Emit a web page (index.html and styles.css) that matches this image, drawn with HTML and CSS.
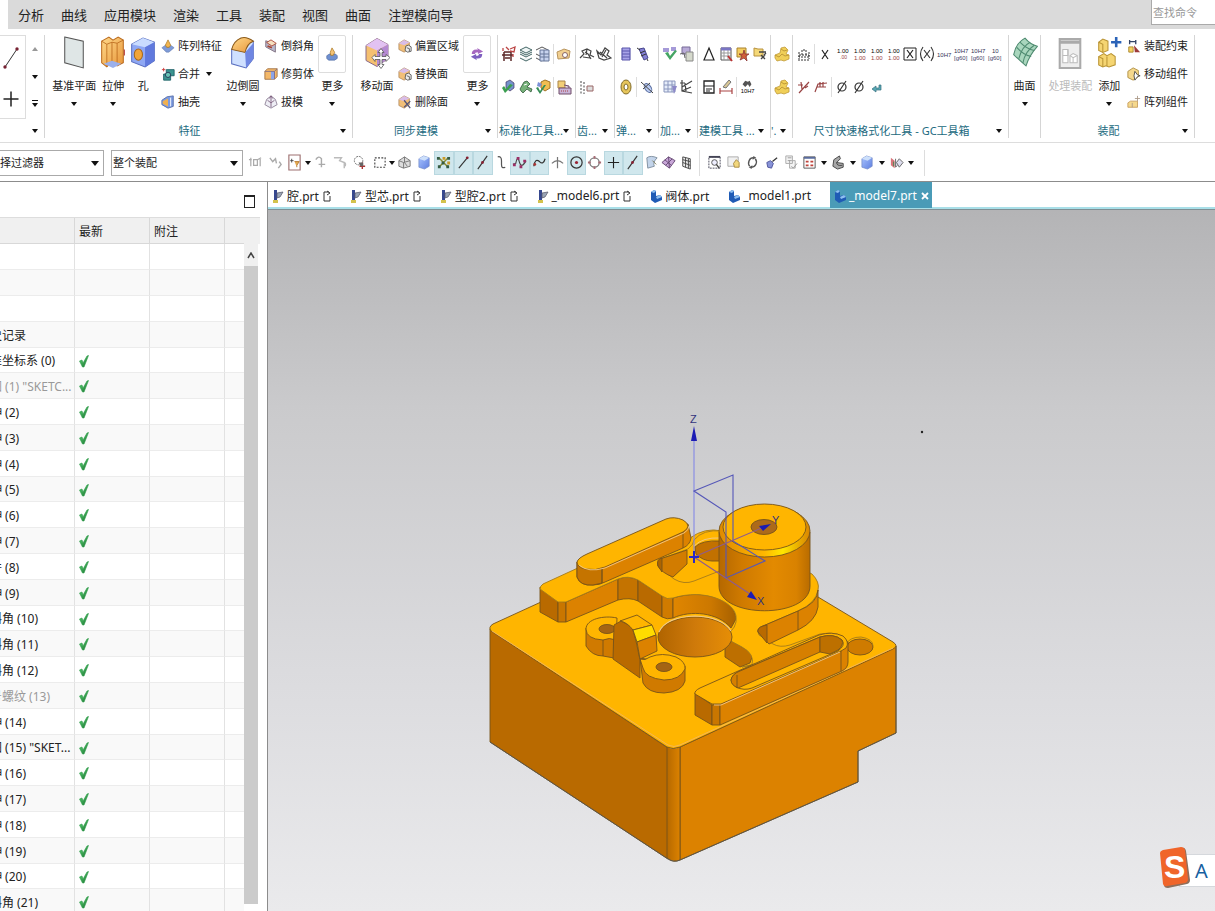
FILE: index.html
```html
<!DOCTYPE html>
<html lang="zh-CN">
<head>
  <meta charset="UTF-8">
  <meta name="viewport" content="width=device-width, initial-scale=1.0">
  <title>_model7.prt</title>
  <link rel="stylesheet" href="styles.css">
</head>
<body>
<!-- icon sprite -->
<svg class="sprite" aria-hidden="true">
  <defs>
    <linearGradient id="gOr" x1="0" x2="1" y1="0" y2="1"><stop offset="0" stop-color="#ffd98a"/><stop offset="1" stop-color="#e8963a"/></linearGradient>
    <linearGradient id="gBl" x1="0" x2="1" y1="0" y2="1"><stop offset="0" stop-color="#a9c4ff"/><stop offset="1" stop-color="#5f7fe0"/></linearGradient>
    <linearGradient id="gGn" x1="0" x2="1" y1="0" y2="1"><stop offset="0" stop-color="#5fe07a"/><stop offset="1" stop-color="#16662a"/></linearGradient>
  </defs>
  <symbol id="check" viewBox="0 0 10 13"><path d="M0.500 6L3 5L4 8L8 1L9.500 0.500L5 12H3.500Z" fill="url(#gGn)" stroke="#2c9a48" stroke-width=".6"/></symbol>
  <symbol id="plane" viewBox="0 0 24 34"><path d="M3 2L21 6V32L3 27Z" fill="#dfe6e6" stroke="#555"/></symbol>
  <symbol id="extrude" viewBox="0 0 24 34"><path d="M1 6L8 2L12 5L17 2L22 5V27L16 30L11 26L6 31L1 27Z" fill="url(#gOr)" stroke="#b9691c"/><path d="M6 9V30M11 7V26M16 8V29M1 6L6 9L11 7L16 8L22 5" fill="none" stroke="#b9691c" stroke-width=".8"/><path d="M3 28L11 25L20 28L12 32Z" fill="#9bb0ec"/><path d="M23 14V20" stroke="#b03030"/></symbol>
  <symbol id="hole" viewBox="0 0 24 34"><path d="M1 9L12 3L23 7V25L14 31L1 26Z" fill="#8fa8f4" stroke="#5a6fc0"/><path d="M1 9L12 3L23 7L14 12Z" fill="#c9dcff"/><path d="M14 12L23 7V25L14 31Z" fill="#6079dd"/><ellipse cx="7.500" cy="19" rx="4" ry="5.500" fill="#f2a53a" stroke="#a5671b"/></symbol>
  <symbol id="blend" viewBox="0 0 24 34"><path d="M1 14L10 4Q13 2 22 6V23L15 32L1 28Z" fill="#cfe0ff" stroke="#5a6fc0"/><path d="M1 14Q3 6 10 3Q15 1 22 6Q16 8 14 17Z" fill="url(#gOr)" stroke="#8a5a1a"/><path d="M14 17L22 8V23L15 32Z" fill="#6f86e2"/></symbol>
  <symbol id="moveface" viewBox="0 0 26 34"><path d="M2 10L13 3L24 9V23L13 31L2 25Z" fill="#f5c070" stroke="#8a6a8a"/><path d="M2 10L13 3L24 9L13 15Z" fill="#e2c2f2"/><path d="M13 15L24 9V23L13 31Z" fill="#b58ad2"/><path d="M17 13L20 17H18V21H22V19L26 22L22 26V24H18V29H20L17 33L14 29H16V24H11V26L8 22L11 19V21H16V17H14Z" fill="#fff" stroke="#555" stroke-width=".8"/></symbol>
  <symbol id="sheet" viewBox="0 0 24 34"><path d="M1 19Q3 8 12 3Q17 9 24 11Q16 20 13 30Q6 24 1 19Z" fill="#a9d6bd" stroke="#4e8a70"/><path d="M4 12Q10 19 18 21M7 7Q14 14 21 15M6 23Q9 11 17 7M10 27Q12 16 21 10" fill="none" stroke="#4e8a70"/></symbol>
  <symbol id="process" viewBox="0 0 24 34"><path d="M2 4H22V32H2Z" fill="#eee" stroke="#aaa" stroke-width="2"/><path d="M2 7H22" stroke="#aaa" stroke-width="3"/><path d="M5 14H10V27H5ZM12 20L15 18L19 20V27H12Z" fill="#fff" stroke="#bbb"/><path d="M10 14V20H5M12 20L15 22L19 20M15 22V27" fill="none" stroke="#bbb"/></symbol>
  <symbol id="addpart" viewBox="0 0 24 34"><path d="M2 7L6 4L11 6V15L6 17L2 15ZM2 21L7 18L10 20L14 18L18 21V29L12 31L9 30L6 31L2 29Z" fill="#f5d572" stroke="#b99435"/><path d="M10 21V30M2 21L6 23V31M2 7L6 9V17" fill="none" stroke="#b99435"/><path d="M19 2V12M14 7H24" stroke="#2b63b8" stroke-width="2.500"/></symbol>
  <symbol id="pin" viewBox="0 0 16 16"><path d="M1 10L5 7L8 9L11 7L15 10L9 15H6Z" fill="#7e9bd8" stroke="#5f76a8" stroke-width=".6"/><path d="M8 1L11 7L9.500 9.500H6.500L5 7Z" fill="#f2b650" stroke="#a8721b" stroke-width=".8"/></symbol>
  <symbol id="pinmore" viewBox="0 0 16 16"><path d="M2 10L5 8H12L14 10V13L11 15H4L2 13Z" fill="#6f90d0" stroke="#49659c" stroke-width=".7"/><path d="M8 1L11 6L9.500 9.500H6.500L6 6Z" fill="#f4c274" stroke="#a8721b" stroke-width=".8"/></symbol>
  <symbol id="unite" viewBox="0 0 16 16"><path d="M1 3H5M3 1V5" stroke="#c33"/><path d="M6 3H15V10H11V15H3V8H6Z" fill="#3a9490" stroke="#1d5f66"/><circle cx="8" cy="9" r="3" fill="#67c2b5" stroke="#235"/></symbol>
  <symbol id="shell" viewBox="0 0 16 16"><path d="M1 6L7 2L14 1V13L8 15L1 11Z" fill="#7b9ae0" stroke="#536ba8"/><path d="M2 7L8 4V13L2 10Z" fill="#f0b050"/><path d="M11 3V13" stroke="#fff"/></symbol>
  <symbol id="chamfer" viewBox="0 0 16 16"><path d="M2 2L13 6V15L2 9Z" fill="#b8b8cc" stroke="#7b6b7b"/><path d="M3 4L8 1L14 5L9 8Z" fill="#f6e0c0" stroke="#a84433"/><path d="M4 8L9 10" stroke="#a84433" stroke-width="2"/></symbol>
  <symbol id="trim" viewBox="0 0 16 16"><path d="M1 5L4 2H15V11L12 14H1Z" fill="#f4b868" stroke="#a07040"/><path d="M8 5H12V14H8Z" fill="#8ca4e8"/><path d="M1 5H12V14M12 5L15 2" fill="none" stroke="#7d6b88"/></symbol>
  <symbol id="draft" viewBox="0 0 16 16"><path d="M8 1L13 5L15 11L8 15L1 11L3 5Z" fill="#eeeef5" stroke="#8d7f95"/><path d="M8 1V8M4 6L8 9L12 6M8 9V14M6 4L8 1L10 4" fill="none" stroke="#7d5d7d"/></symbol>
  <symbol id="face" viewBox="0 0 16 16"><path d="M1 5L7 1L13 4V11L7 15L1 12Z" fill="#f2bf78" stroke="#a8815a" stroke-width=".8"/><path d="M1 5L7 1L13 4L7 7Z" fill="#d9bde8"/><path d="M9 8L12 7L15 9V14L11 15L8 13Z" fill="#eee" stroke="#555"/><path d="M10 10L13 11V14" fill="none" stroke="#555"/></symbol>
  <symbol id="facedel" viewBox="0 0 16 16"><path d="M1 5L7 1L13 4V11L7 15L1 12Z" fill="#f2bf78" stroke="#a8815a" stroke-width=".8"/><path d="M1 5L7 1L13 4L7 7Z" fill="#d9bde8"/><path d="M7 6L14 15M14 7L7 14" stroke="#557" stroke-width="1.500"/></symbol>
  <symbol id="cycle" viewBox="0 0 16 16"><path d="M2 8Q2 2 9 3L8 1L15 5L9 8V6Q5 6 6 8Z" fill="#a667c0"/><path d="M14 8Q14 14 7 13L8 15L1 11L7 8V10Q11 10 10 8Z" fill="#7e5fc0"/></symbol>
  <symbol id="assem" viewBox="0 0 16 16"><path d="M3 1V6M10 1V6M3 3H10" stroke="#346" stroke-width="1.500"/><path d="M2 9H7V15H2Z" fill="#f5d060" stroke="#a8862a"/><path d="M8 7L15 15H9Z" fill="#9c3a3a"/></symbol>
  <symbol id="movepart" viewBox="0 0 16 16"><path d="M1 5L7 1L13 4V11L7 15L1 12Z" fill="#f5d88c" stroke="#ab8a3b"/><path d="M9 5L12 9L15 10L12 11L9 15L8 10Z" fill="#fff" stroke="#444"/></symbol>
  <symbol id="patpart" viewBox="0 0 16 16"><path d="M1 9L4 7H12V14H1Z" fill="#f5d88c" stroke="#c79d5a"/><path d="M6 9V14M12 1V7M9 4H15" stroke="#a98"/></symbol>
  <symbol id="frame" viewBox="0 0 16 16"><path d="M3 6H10V15M3 6V15M1 9H12M4 12H9" fill="none" stroke="#5d2a2a" stroke-width="1.500"/><path d="M2 2V5M5 1L8 4M9 3L14 1L13 6L9 5M12 8V11" fill="none" stroke="#b44" stroke-width="1.300"/></symbol>
  <symbol id="stack" viewBox="0 0 16 16"><path d="M2 4L8 1L14 4L8 7ZM2 8L8 11L14 8M2 12L8 15L14 12M2 6L8 9L14 6" fill="#eef5f5" stroke="#466"/></symbol>
  <symbol id="stack2" viewBox="0 0 16 16"><path d="M1 4L7 1L13 4M1 8L7 11M1 12L7 15" fill="none" stroke="#555"/><path d="M5 4H14V15H5Z" fill="#c7d3ee" stroke="#679"/><path d="M5 8H14M5 11H14M9 4V15" stroke="#679"/></symbol>
  <symbol id="folder" viewBox="0 0 16 16"><path d="M1 6L6 4L8 3L14 5L13 12L2 13Z" fill="#f1cf90" stroke="#b8945c"/><circle cx="9" cy="9" r="2.500" fill="#fff" stroke="#866"/></symbol>
  <symbol id="blobs" viewBox="0 0 16 16"><path d="M5 3L9 1L13 4V9L9 12L5 9Z" fill="#7592cc" stroke="#436" stroke-width=".7"/><path d="M1 9L4 14L12 6L9 5L5 10L3 7Z" fill="#3b9f50"/></symbol>
  <symbol id="recycle" viewBox="0 0 16 16"><path d="M2 10L6 3L9 2L12 5L9 8L14 10L13 13L9 10L5 14L3 12Z" fill="#77b27a" stroke="#335c3d" stroke-width=".8"/><path d="M6 6L9 5" stroke="#fff"/></symbol>
  <symbol id="cubechk" viewBox="0 0 16 16"><path d="M6 3L10 1L15 3V9L10 12L6 9Z" fill="#f2bd50" stroke="#a07328"/><path d="M1 9L3 8L5 12L9 6L11 6L5 15Z" fill="#348d55"/><path d="M3 3L7 5L5 8L2 7Z" fill="#7d91d8"/></symbol>
  <symbol id="toolbox" viewBox="0 0 16 16"><path d="M2 2H9V9H2Z" fill="#f2ce77" stroke="#aa8448"/><path d="M3 9H15V15H3ZM8 6L13 7V9" fill="#c9b4d8" stroke="#714e6b"/><path d="M5 12H13" stroke="#a44" stroke-dasharray="1 1"/></symbol>
  <symbol id="gear" viewBox="0 0 16 16"><path d="M1 12L5 8L3 5L8 3L12 5L11 9L15 11M4 11L11 12M6 6L9 8L12 13M8 3L7 9" fill="none" stroke="#444" stroke-width="1.200"/></symbol>
  <symbol id="gear2" viewBox="0 0 16 16"><path d="M1 5L5 9L9 2L13 5L11 9L15 12L8 14L3 12ZM4 6L11 12M10 4L6 11" fill="none" stroke="#444" stroke-width="1.200"/></symbol>
  <symbol id="gearlist" viewBox="0 0 16 16"><path d="M2 2V15M5 3V15" stroke="#444" stroke-dasharray="2 1.500"/><path d="M8 7H14V12H8Z" fill="#ddd" stroke="#966"/></symbol>
  <symbol id="spring" viewBox="0 0 16 16"><path d="M4 2H12V14H4Z" fill="#a8a3e8"/><path d="M4 2H12M4 5H12M4 8H12M4 11H12M4 14H12M4 2V14M12 2V14" stroke="#5a57ac" stroke-width="1.200"/></symbol>
  <symbol id="spring2" viewBox="0 0 16 16"><path d="M4 3L9 2L13 12L9 14Z" fill="#8581d4" stroke="#47458e"/><path d="M2 2L5 4M12 13L13 15M5 7L10 5M6 10L11 8" stroke="#333"/></symbol>
  <symbol id="ring" viewBox="0 0 16 16"><ellipse cx="8" cy="8" rx="5" ry="7" fill="#e6c55b" stroke="#816b28"/><ellipse cx="8" cy="8" rx="2" ry="3" fill="#fff" stroke="#816b28"/></symbol>
  <symbol id="coil" viewBox="0 0 16 16"><ellipse cx="9" cy="9" rx="3" ry="5" transform="rotate(-35 9 9)" fill="#bccdf3" stroke="#55699c"/><path d="M2 3L14 14M4 10L11 4" stroke="#444"/></symbol>
  <symbol id="vcheck" viewBox="0 0 16 16"><path d="M1 2H7V6H1ZM9 1H14V5H9Z" fill="#a59ad8"/><path d="M3 7L6 6L8 10L13 4L15 5L8 14Z" fill="#45a564"/></symbol>
  <symbol id="copy" viewBox="0 0 16 16"><path d="M3 1H11V8H3Z" fill="#b9abd8" stroke="#776b97"/><path d="M7 6H14V15H7Z" fill="#d5d9cc" stroke="#888"/><path d="M1 8L5 7L6 12" fill="none" stroke="#666"/></symbol>
  <symbol id="grid" viewBox="0 0 16 16"><path d="M2 2H13V13H2Z" fill="#e6edfa" stroke="#8a96bc"/><path d="M2 6H13M2 10H13M6 2V13M10 2V13" stroke="#8a96bc"/><path d="M10 7H15L12 15Z" fill="#8c88c8"/></symbol>
  <symbol id="axes" viewBox="0 0 16 16"><path d="M3 1V12L13 14M3 8L13 2M6 4L7 12M12 8L3 12M1 4H6" fill="none" stroke="#444" stroke-width="1.200"/></symbol>
  <symbol id="tri" viewBox="0 0 16 16"><path d="M8 2L13 14H3Z" fill="none" stroke="#222" stroke-width="1.200"/></symbol>
  <symbol id="table" viewBox="0 0 16 16"><path d="M3 2H13V14H3Z" fill="#fff" stroke="#555"/><path d="M3 3H13" stroke="#7a75c4" stroke-width="3"/><path d="M3 7H13M3 10H13M6 4V14M10 4V14" stroke="#999"/><path d="M10 10L14 15" stroke="#b33" stroke-width="2"/></symbol>
  <symbol id="star" viewBox="0 0 16 16"><path d="M2 2H11V11H2Z" fill="#f4cd60" stroke="#a8822f"/><path d="M9 4L10 8L14 8L11 10L12 15L9 12L5 14L7 10L4 8H8Z" fill="#d2603a" stroke="#833" stroke-width=".8"/></symbol>
  <symbol id="partgear" viewBox="0 0 16 16"><path d="M2 2L6 3H11V10H2Z" fill="#f4d878" stroke="#b8923f"/><path d="M7 6H14M9 9L13 13M13 9L9 13M14 7L12 9" stroke="#444" stroke-width="1.300"/></symbol>
  <symbol id="note" viewBox="0 0 16 16"><path d="M3 2H13V14H3Z" fill="#fff" stroke="#222" stroke-width="1.300"/><path d="M3 7H13M5 10H11M5 12H9" stroke="#222"/></symbol>
  <symbol id="measure" viewBox="0 0 16 16"><path d="M2 9V15M14 9V15M2 12H14" stroke="#a44" stroke-width="1.200"/><path d="M5 8L11 1L13 3L8 9Z" fill="#d9c796" stroke="#777"/></symbol>
  <symbol id="find" viewBox="0 0 18 16"><path d="M4 5L7 1L10 2L12 1L14 5L12 8L10 5L7 8Z" fill="#555"/><text x="2" y="15" font-size="6.500">10H7</text></symbol>
  <symbol id="cubes" viewBox="0 0 16 16"><path d="M7 2L11 1L14 4L12 8L15 9V13L10 15L7 14L3 15L1 12V9L6 7Z" fill="#f0cf58" stroke="#c09a38" stroke-width=".8"/><path d="M7 3L10 5L13 4M1 9L5 11L8 8L11 10L15 9" fill="none" stroke="#c09a38"/></symbol>
  <symbol id="dims" viewBox="0 0 16 16"><path d="M6 9V4H10V9M3 9H13V11H3ZM2 14H14M3 6V13M13 6V13" fill="none" stroke="#333" stroke-dasharray="2 1"/></symbol>
  <symbol id="x" viewBox="0 0 16 16"><path d="M5 4L11 13M11 4L5 13" stroke="#222" stroke-width="1.200"/></symbol>
  <symbol id="num" viewBox="0 0 16 16"><text x="3" y="7" font-size="6">1.00</text><text x="3" y="14" font-size="6" fill="#944">1.00</text></symbol>
  <symbol id="numsm" viewBox="0 0 16 16"><text x="3" y="7" font-size="6">1.00</text><text x="6" y="13" font-size="5" fill="#944">.00</text></symbol>
  <symbol id="xbox" viewBox="0 0 16 16"><path d="M2 2H14V14H2Z" fill="none" stroke="#222"/><path d="M5 4L11 12M11 4L5 12" stroke="#222" stroke-width="1.200"/></symbol>
  <symbol id="xpar" viewBox="0 0 16 16"><path d="M5 4L11 12M11 4L5 12M4 1Q-1 8 4 15M12 1Q17 8 12 15" fill="none" stroke="#333" stroke-width="1.100"/></symbol>
  <symbol id="h7" viewBox="0 0 16 16"><text x="1" y="11" font-size="6" fill="#335">10H7</text></symbol>
  <symbol id="h7b" viewBox="0 0 16 16"><text x="1" y="7" font-size="6" fill="#335">10H7</text><text x="1" y="14" font-size="6" fill="#446">[g60]</text></symbol>
  <symbol id="h7c" viewBox="0 0 16 16"><text x="5" y="7" font-size="6" fill="#335">10</text><text x="1" y="14" font-size="6" fill="#446">[g60]</text></symbol>
  <symbol id="slope" viewBox="0 0 16 16"><path d="M3 14L13 3M2 6H7M5 3L6 10M9 9L12 7" stroke="#944" stroke-width="1.200"/></symbol>
  <symbol id="slope2" viewBox="0 0 16 16"><path d="M2 13L5 5L14 4M4 8H13M7 3V8M10 3V8" fill="none" stroke="#944" stroke-width="1.200"/></symbol>
  <symbol id="diam" viewBox="0 0 16 16"><circle cx="8" cy="8" r="4" fill="none" stroke="#333" stroke-width="1.200"/><path d="M4 14L12 2" stroke="#333" stroke-width="1.200"/></symbol>
  <symbol id="return" viewBox="0 0 16 16"><path d="M11 6H13V11H8V13L4 10L8 7V9H11Z" fill="#58a8b4" stroke="#36707f" stroke-width=".7"/></symbol>
  <symbol id="snap" viewBox="0 0 16 16"><path d="M3 3V12M6 5H10V11H6ZM13 3V12M1 5H4M10 5L14 3" fill="none" stroke="#aaa" stroke-width="1.300"/></symbol>
  <symbol id="snap2" viewBox="0 0 16 16"><path d="M2 3L5 7L8 4L9 9M12 7L14 10L11 14" fill="none" stroke="#aaa" stroke-width="1.500"/></symbol>
  <symbol id="filterbox" viewBox="0 0 16 18"><path d="M2 1H14V17H2Z" fill="#fff" stroke="#9d7070" stroke-width="1.200"/><path d="M5 5V9M3.500 7H7" stroke="#444"/><path d="M8 8H13L10.500 12V14" fill="#e6ab50" stroke="#b9803a"/></symbol>
  <symbol id="curl" viewBox="0 0 16 16"><path d="M3 5Q6 0 9 4V13M6 10H13" fill="none" stroke="#aaa" stroke-width="1.500"/></symbol>
  <symbol id="curl2" viewBox="0 0 16 16"><path d="M1 3H9L7 6L12 8V14M12 8Q14 9 13 12" fill="none" stroke="#bbb" stroke-width="1.500"/></symbol>
  <symbol id="magnet" viewBox="0 0 16 16"><circle cx="7" cy="6" r="4.500" fill="none" stroke="#666" stroke-dasharray="2 1"/><path d="M11 8V15M8 12H14" stroke="#a33" stroke-width="1.500"/><path d="M7 8H12V12H9Z" fill="#666"/></symbol>
  <symbol id="marquee" viewBox="0 0 16 16"><path d="M3 3H14V13H3Z" fill="none" stroke="#444" stroke-width="1.200" stroke-dasharray="2 1.500"/></symbol>
  <symbol id="wire" viewBox="0 0 16 16"><path d="M2 6L8 2L14 6V12L7 14L2 12Z" fill="#ddd" stroke="#777"/><path d="M2 6L7 8V14M7 8L14 6M8 2V8L11 12" fill="none" stroke="#777"/></symbol>
  <symbol id="bcube" viewBox="0 0 16 16"><path d="M2 4L7 1L13 3V12L8 15L2 13Z" fill="url(#gBl)" stroke="#6f87c4" stroke-width=".7"/><path d="M2 4L7 1L13 3L8 6Z" fill="#cde0fb"/></symbol>
  <symbol id="dots" viewBox="0 0 16 16"><path d="M3 3L13 13M13 3L3 13" stroke="#8c8c2a" stroke-width="1.500"/><path d="M1 2H4V5H1ZM12 2H15V5H12ZM2 11H5V14H2ZM11 11H14V14H11ZM6 7H9V10H6Z" fill="#355c45"/><path d="M7 2H10V5H7ZM12 7H15V10H12Z" fill="#c99b28"/></symbol>
  <symbol id="line" viewBox="0 0 16 16"><path d="M3 14L12 3" stroke="#333" stroke-width="1.200"/><circle cx="12" cy="3" r="1.500" fill="#823"/></symbol>
  <symbol id="line2" viewBox="0 0 16 16"><path d="M3 15L13 1" stroke="#333" stroke-width="1.200"/><circle cx="8" cy="8" r="1.500" fill="#823"/></symbol>
  <symbol id="hook" viewBox="0 0 16 16"><path d="M4 2Q8 1 8 6V10Q8 15 12 13" fill="none" stroke="#555" stroke-width="1.300"/></symbol>
  <symbol id="wave" viewBox="0 0 16 16"><path d="M1 10L4 9Q6 -1 8 8Q10 15 15 6" fill="none" stroke="#444" stroke-width="1.200"/><path d="M5 2H8V5H5ZM1 9H4V12H1ZM8 11H11V14H8ZM12 5H15V8H12Z" fill="#9c2e66"/></symbol>
  <symbol id="wave2" viewBox="0 0 16 16"><path d="M2 12Q3 3 8 7Q12 11 14 4" fill="none" stroke="#333" stroke-width="1.300"/><circle cx="3" cy="10" r="1.500" fill="#a33"/></symbol>
  <symbol id="cross" viewBox="0 0 16 16"><path d="M8 2V14M2 9Q8 3 14 9" fill="none" stroke="#777" stroke-width="1.300"/></symbol>
  <symbol id="center" viewBox="0 0 16 16"><circle cx="8" cy="8" r="6" fill="none" stroke="#333" stroke-width="1.300"/><circle cx="8" cy="8" r="1.700" fill="#923"/></symbol>
  <symbol id="quad" viewBox="0 0 16 16"><circle cx="8" cy="8" r="5" fill="none" stroke="#777" stroke-width="1.300"/><path d="M7 1H9V4H7ZM7 12H9V15H7ZM1 7H4V9H1ZM12 7H15V9H12Z" fill="#a76c75"/></symbol>
  <symbol id="plus" viewBox="0 0 16 16"><path d="M8 2V14M2 8H14" stroke="#222" stroke-width="1.200"/></symbol>
  <symbol id="surf" viewBox="0 0 16 16"><path d="M3 3Q7 0 14 3Q9 8 11 12L4 14Z" fill="#c3d4ea" stroke="#8090a0"/><path d="M9 6L13 10" stroke="#775"/></symbol>
  <symbol id="mesh" viewBox="0 0 16 16"><path d="M1 8L8 2L15 6L9 14Z" fill="#c8a6d8" stroke="#664a74"/><path d="M4 5L11 11M12 4L5 11M8 2L9 14" stroke="#664a74"/></symbol>
  <symbol id="lattice" viewBox="0 0 16 16"><path d="M4 2L12 4V15L4 12ZM7 3V13M10 4V14M4 5L12 7M4 8L12 11" fill="#eee" stroke="#444"/></symbol>
  <symbol id="zoomwin" viewBox="0 0 16 16"><path d="M2 2H14V14H2Z" fill="none" stroke="#445" stroke-dasharray="2 1"/><path d="M2 2H14" stroke="#445" stroke-width="2"/><circle cx="8" cy="8" r="3" fill="#eef" stroke="#555"/><path d="M10 10L13 14" stroke="#444" stroke-width="1.500"/></symbol>
  <symbol id="hand" viewBox="0 0 16 16"><path d="M2 2H13V12H2Z" fill="#f1f1f1" stroke="#aaa"/><path d="M8 9L11 5L14 8V13H9Z" fill="#f2d77c" stroke="#a88b43"/></symbol>
  <symbol id="rotate" viewBox="0 0 16 16"><path d="M5 12A5 5.500 0 0 1 9 3M11 4A5 5.500 0 0 1 7 13" fill="none" stroke="#555" stroke-width="1.500"/><path d="M9 1L12 3L8 5ZM7 15L4 13L8 11Z" fill="#555"/></symbol>
  <symbol id="persp" viewBox="0 0 16 16"><path d="M3 8L7 6L10 9L8 14L4 13Z" fill="#8893d8" stroke="#50569c"/><path d="M9 7L14 3" stroke="#333" stroke-width="1.300"/></symbol>
  <symbol id="pages" viewBox="0 0 16 16"><path d="M3 1H10V9H3ZM7 6H13V14H7Z" fill="#f4f4f4" stroke="#aaa"/><path d="M5 3H9M5 6H8M9 12L11 14L15 9" fill="none" stroke="#999"/></symbol>
  <symbol id="layout" viewBox="0 0 16 16"><path d="M2 2H14V14H2Z" fill="#fff" stroke="#555"/><path d="M2 3H14" stroke="#5a6c9e" stroke-width="2"/><path d="M4 6H7V8H4ZM9 6H12V8H9ZM4 10H7V12H4ZM9 10H12V12H9Z" fill="#c0443c"/></symbol>
  <symbol id="shade" viewBox="0 0 16 16"><path d="M3 5L9 1L10 4L6 8L13 9V13L7 15L2 12Z" fill="#a8a8a8" stroke="#444"/><path d="M6 8Q6 12 12 11" fill="none" stroke="#444"/></symbol>
  <symbol id="clip" viewBox="0 0 16 16"><path d="M2 3L6 6V14L2 11Z" fill="#d8747a"/><path d="M7 4L7 13L9 11M11 4L15 8L11 13L8 8Z" fill="#dde" stroke="#666"/><path d="M5 12V7" stroke="#3a8a50"/></symbol>
  <symbol id="partmod" viewBox="0 0 12 14"><path d="M2 1H5V13H2Z" fill="#36488f"/><path d="M5 4L11 3L8 8L5 9Z" fill="#9aa5b5" stroke="#556" stroke-width=".7"/><path d="M1 11H6V14H1Z" fill="#d3c24c"/></symbol>
  <symbol id="part" viewBox="0 0 12 14"><path d="M1 3L4 1L6 2V7L10 6L12 8V11L5 14L1 11Z" fill="#1f5bb5"/><path d="M1 3L4 1L6 2L4 4ZM6 8L10 6L12 8L7 10Z" fill="#8fc0f0"/></symbol>
  <symbol id="pending" viewBox="0 0 8 12"><path d="M6 2H1V11H7V6M4 1L7 3L4 5" fill="none" stroke="#333"/></symbol>
  <symbol id="sketchline" viewBox="0 0 18 24"><path d="M3 21L15 3" stroke="#333"/><circle cx="3" cy="21" r="1.700" fill="#723"/><circle cx="15" cy="3" r="1.700" fill="#723"/></symbol>
</svg>

<nav class="menubar">
  <button>分析</button>
  <button>曲线</button>
  <button>应用模块</button>
  <button>渲染</button>
  <button>工具</button>
  <button>装配</button>
  <button>视图</button>
  <button>曲面</button>
  <button>注塑模向导</button>
  <input class="search" type="text" placeholder="查找命令" aria-label="查找命令">
</nav>

<div class="ribbon">
  <section class="group g-curve">
    <div class="gallery">
      <div class="gallery-items">
        <button aria-label="直线"><svg width="18" height="24"><use href="#sketchline"/></svg></button>
        <button aria-label="点"><svg width="20" height="20"><use href="#plus"/></svg></button>
      </div>
      <div class="gallery-nav">
        <button aria-label="上"><span class="caret up"></span></button>
        <button aria-label="下"><span class="caret"></span></button>
        <button aria-label="展开"><span class="caret bar"></span></button>
      </div>
    </div>
    <div class="title"><span></span><button aria-label="曲线选项"><i class="caret"></i></button></div>
  </section>

  <section class="group g-feature">
    <div class="tools">
      <button class="big"><svg><use href="#plane"/></svg>基准平面<i class="caret"></i></button>
      <button class="big"><svg><use href="#extrude"/></svg>拉伸<i class="caret"></i></button>
      <button class="big"><svg><use href="#hole"/></svg>孔</button>
      <div class="stack">
        <button><svg><use href="#pin"/></svg>阵列特征</button>
        <button><svg><use href="#unite"/></svg>合并<i class="caret"></i></button>
        <button><svg><use href="#shell"/></svg>抽壳</button>
      </div>
      <button class="big"><svg><use href="#blend"/></svg>边倒圆<i class="caret"></i></button>
      <div class="stack">
        <button><svg><use href="#chamfer"/></svg>倒斜角</button>
        <button><svg><use href="#trim"/></svg>修剪体</button>
        <button><svg><use href="#draft"/></svg>拔模</button>
      </div>
      <button class="big more"><span><svg><use href="#pinmore"/></svg></span>更多<i class="caret"></i></button>
    </div>
    <div class="title"><span>特征</span><button aria-label="特征选项"><i class="caret"></i></button></div>
  </section>

  <section class="group g-sync">
    <div class="tools">
      <button class="big"><svg><use href="#moveface"/></svg>移动面</button>
      <div class="stack">
        <button><svg><use href="#face"/></svg>偏置区域</button>
        <button><svg><use href="#face"/></svg>替换面</button>
        <button><svg><use href="#facedel"/></svg>删除面</button>
      </div>
      <button class="big more"><span><svg><use href="#cycle"/></svg></span>更多<i class="caret"></i></button>
    </div>
    <div class="title"><span>同步建模</span><button aria-label="同步建模选项"><i class="caret"></i></button></div>
  </section>

  <section class="group g-std">
    <div class="icons">
      <div>
        <button aria-label="属性工具"><svg><use href="#frame"/></svg></button>
        <button aria-label="图层"><svg><use href="#stack"/></svg></button>
        <button aria-label="图层类别"><svg><use href="#stack2"/></svg></button>
        <hr>
        <button aria-label="打开"><svg><use href="#folder"/></svg></button>
      </div>
      <div>
        <button aria-label="检查"><svg><use href="#blobs"/></svg></button>
        <button aria-label="更新"><svg><use href="#recycle"/></svg></button>
        <button aria-label="模型检查"><svg><use href="#cubechk"/></svg></button>
        <hr>
        <button aria-label="工具箱"><svg><use href="#toolbox"/></svg></button>
      </div>
    </div>
    <div class="title"><span>标准化工具...</span><button aria-label="标准化工具选项"><i class="caret"></i></button></div>
  </section>

  <section class="group g-gear">
    <div class="icons">
      <div>
        <button aria-label="柱齿轮"><svg><use href="#gear"/></svg></button>
        <button aria-label="锥齿轮"><svg><use href="#gear2"/></svg></button>
      </div>
      <div><button aria-label="齿轮列表"><svg><use href="#gearlist"/></svg></button></div>
    </div>
    <div class="title"><span>齿...</span><button aria-label="齿轮选项"><i class="caret"></i></button></div>
  </section>

  <section class="group g-spring">
    <div class="icons">
      <div>
        <button aria-label="压缩弹簧"><svg><use href="#spring"/></svg></button>
        <button aria-label="拉伸弹簧"><svg><use href="#spring2"/></svg></button>
      </div>
      <div>
        <button aria-label="碟簧"><svg><use href="#ring"/></svg></button>
        <hr>
        <button aria-label="删除弹簧"><svg><use href="#coil"/></svg></button>
      </div>
    </div>
    <div class="title"><span>弹...</span><button aria-label="弹簧选项"><i class="caret"></i></button></div>
  </section>

  <section class="group g-mach">
    <div class="icons">
      <div>
        <button aria-label="加工准备"><svg><use href="#vcheck"/></svg></button>
        <button aria-label="复制"><svg><use href="#copy"/></svg></button>
      </div>
      <div>
        <button aria-label="表格"><svg><use href="#grid"/></svg></button>
        <button aria-label="坐标"><svg><use href="#axes"/></svg></button>
      </div>
    </div>
    <div class="title"><span>加...</span><button aria-label="加工选项"><i class="caret"></i></button></div>
  </section>

  <section class="group g-model">
    <div class="icons">
      <div>
        <button aria-label="三角"><svg><use href="#tri"/></svg></button>
        <button aria-label="表"><svg><use href="#table"/></svg></button>
        <button aria-label="重用"><svg><use href="#star"/></svg></button>
        <button aria-label="部件"><svg><use href="#partgear"/></svg></button>
      </div>
      <div>
        <button aria-label="注释"><svg><use href="#note"/></svg></button>
        <button aria-label="测量"><svg><use href="#measure"/></svg></button>
        <hr>
        <button aria-label="公差查询"><svg><use href="#find"/></svg></button>
      </div>
    </div>
    <div class="title"><span>建模工具 ...</span><button aria-label="建模工具选项"><i class="caret"></i></button></div>
  </section>

  <section class="group g-cubes">
    <div class="icons">
      <div><button aria-label="装配导出"><svg><use href="#cubes"/></svg></button></div>
      <div><button aria-label="装配导入"><svg><use href="#cubes"/></svg></button></div>
    </div>
    <div class="title"><span>'.</span><button aria-label="选项"><i class="caret"></i></button></div>
  </section>

  <section class="group g-dim">
    <div class="icons">
      <div>
        <button aria-label="尺寸"><svg><use href="#dims"/></svg></button>
        <hr>
        <button aria-label="无公差"><svg><use href="#x"/></svg></button>
        <button aria-label="公差1"><svg><use href="#numsm"/></svg></button>
        <button aria-label="公差2"><svg><use href="#num"/></svg></button>
        <button aria-label="公差3"><svg><use href="#num"/></svg></button>
        <button aria-label="公差4"><svg><use href="#num"/></svg></button>
        <button aria-label="基本尺寸"><svg><use href="#xbox"/></svg></button>
        <button aria-label="参考尺寸"><svg><use href="#xpar"/></svg></button>
        <button aria-label="配合1"><svg><use href="#h7"/></svg></button>
        <button aria-label="配合2"><svg><use href="#h7b"/></svg></button>
        <button aria-label="配合3"><svg><use href="#h7b"/></svg></button>
        <button aria-label="配合4"><svg><use href="#h7c"/></svg></button>
      </div>
      <div>
        <button aria-label="对齐"><svg><use href="#slope"/></svg></button>
        <button aria-label="水平"><svg><use href="#slope2"/></svg></button>
        <hr>
        <button aria-label="直径"><svg><use href="#diam"/></svg></button>
        <button aria-label="直径前缀"><svg><use href="#diam"/></svg></button>
        <button aria-label="还原"><svg><use href="#return"/></svg></button>
      </div>
    </div>
    <div class="title"><span>尺寸快速格式化工具 - GC工具箱</span><button aria-label="尺寸选项"><i class="caret"></i></button></div>
  </section>

  <section class="group g-surface">
    <div class="tools">
      <button class="big"><svg><use href="#sheet"/></svg>曲面<i class="caret"></i></button>
    </div>
  </section>

  <section class="group g-assembly">
    <div class="tools">
      <button class="big" disabled><svg><use href="#process"/></svg>处理装配</button>
      <button class="big"><svg><use href="#addpart"/></svg>添加<i class="caret"></i></button>
      <div class="stack">
        <button><svg><use href="#assem"/></svg>装配约束</button>
        <button><svg><use href="#movepart"/></svg>移动组件</button>
        <button><svg><use href="#patpart"/></svg>阵列组件</button>
      </div>
    </div>
    <div class="title"><span>装配</span><button aria-label="装配选项"><i class="caret"></i></button></div>
  </section>
</div>

<div class="selectbar">
  <div class="combo filter"><select aria-label="选择过滤器"><option>无选择过滤器</option></select></div>
  <div class="combo scope"><select aria-label="选择范围"><option>整个装配</option></select></div>
  <div class="strip s1">
    <button aria-label="捕捉"><svg><use href="#snap"/></svg></button>
    <button aria-label="重置"><svg><use href="#snap2"/></svg></button>
    <button aria-label="过滤"><svg><use href="#filterbox"/></svg></button>
    <i class="caret"></i>
    <button aria-label="向上一级"><svg><use href="#curl"/></svg></button>
    <button aria-label="向下一级"><svg><use href="#curl2"/></svg></button>
    <button aria-label="磁铁"><svg><use href="#magnet"/></svg></button>
    <button aria-label="矩形选择"><svg><use href="#marquee"/></svg></button>
    <i class="caret"></i>
    <button aria-label="线框"><svg><use href="#wire"/></svg></button>
    <button aria-label="实体"><svg><use href="#bcube"/></svg></button>
  </div>
  <div class="strip s2">
    <button class="on" aria-label="启用捕捉点"><svg><use href="#dots"/></svg></button>
    <button class="on" aria-label="端点"><svg><use href="#line"/></svg></button>
    <button class="on" aria-label="中点"><svg><use href="#line2"/></svg></button>
    <button aria-label="控制点"><svg><use href="#hook"/></svg></button>
    <button class="on" aria-label="极点"><svg><use href="#wave"/></svg></button>
    <button class="on" aria-label="定义点"><svg><use href="#wave2"/></svg></button>
    <button aria-label="交点"><svg><use href="#cross"/></svg></button>
    <button class="on" aria-label="圆弧中心"><svg><use href="#center"/></svg></button>
    <button aria-label="象限点"><svg><use href="#quad"/></svg></button>
    <button class="on" aria-label="现有点"><svg><use href="#plus"/></svg></button>
    <button class="on" aria-label="曲线上的点"><svg><use href="#line2"/></svg></button>
    <button aria-label="面上的点"><svg><use href="#surf"/></svg></button>
    <button aria-label="小平面"><svg><use href="#mesh"/></svg></button>
    <button aria-label="栅格"><svg><use href="#lattice"/></svg></button>
  </div>
  <div class="strip s3">
    <button aria-label="缩放窗口"><svg><use href="#zoomwin"/></svg></button>
    <button aria-label="平移"><svg><use href="#hand"/></svg></button>
    <button aria-label="旋转"><svg><use href="#rotate"/></svg></button>
    <button aria-label="透视"><svg><use href="#persp"/></svg></button>
    <button aria-label="页面"><svg><use href="#pages"/></svg></button>
    <button aria-label="布局"><svg><use href="#layout"/></svg></button>
    <i class="caret"></i>
    <button aria-label="渲染样式"><svg><use href="#shade"/></svg></button>
    <i class="caret"></i>
    <button aria-label="视图方向"><svg><use href="#bcube"/></svg></button>
    <i class="caret"></i>
    <button aria-label="截面"><svg><use href="#clip"/></svg></button>
    <i class="caret"></i>
  </div>
</div>

<main>
  <aside>
    <div class="panel-top"><button class="maximize" aria-label="最大化"></button></div>
    <div class="navigator">
      <div class="tree">
        <table>
          <thead>
            <tr><th></th><th>最新</th><th>附注</th><th></th></tr>
          </thead>
          <tbody>
            <tr><td></td><td></td><td></td><td></td></tr>
            <tr><td></td><td></td><td></td><td></td></tr>
            <tr><td></td><td></td><td></td><td></td></tr>
            <tr><td>历史记录</td><td></td><td></td><td></td></tr>
            <tr><td>基准坐标系 (0)</td><td><svg><use href="#check"/></svg></td><td></td><td></td></tr>
            <tr class="off"><td>草图 (1) "SKETC...</td><td><svg><use href="#check"/></svg></td><td></td><td></td></tr>
            <tr><td>拉伸 (2)</td><td><svg><use href="#check"/></svg></td><td></td><td></td></tr>
            <tr><td>拉伸 (3)</td><td><svg><use href="#check"/></svg></td><td></td><td></td></tr>
            <tr><td>拉伸 (4)</td><td><svg><use href="#check"/></svg></td><td></td><td></td></tr>
            <tr><td>拉伸 (5)</td><td><svg><use href="#check"/></svg></td><td></td><td></td></tr>
            <tr><td>拉伸 (6)</td><td><svg><use href="#check"/></svg></td><td></td><td></td></tr>
            <tr><td>拉伸 (7)</td><td><svg><use href="#check"/></svg></td><td></td><td></td></tr>
            <tr><td>合并 (8)</td><td><svg><use href="#check"/></svg></td><td></td><td></td></tr>
            <tr><td>拉伸 (9)</td><td><svg><use href="#check"/></svg></td><td></td><td></td></tr>
            <tr><td>倒斜角 (10)</td><td><svg><use href="#check"/></svg></td><td></td><td></td></tr>
            <tr><td>倒斜角 (11)</td><td><svg><use href="#check"/></svg></td><td></td><td></td></tr>
            <tr><td>倒斜角 (12)</td><td><svg><use href="#check"/></svg></td><td></td><td></td></tr>
            <tr class="off"><td>符号螺纹 (13)</td><td><svg><use href="#check"/></svg></td><td></td><td></td></tr>
            <tr><td>拉伸 (14)</td><td><svg><use href="#check"/></svg></td><td></td><td></td></tr>
            <tr><td>草图 (15) "SKET...</td><td><svg><use href="#check"/></svg></td><td></td><td></td></tr>
            <tr><td>拉伸 (16)</td><td><svg><use href="#check"/></svg></td><td></td><td></td></tr>
            <tr><td>拉伸 (17)</td><td><svg><use href="#check"/></svg></td><td></td><td></td></tr>
            <tr><td>拉伸 (18)</td><td><svg><use href="#check"/></svg></td><td></td><td></td></tr>
            <tr><td>拉伸 (19)</td><td><svg><use href="#check"/></svg></td><td></td><td></td></tr>
            <tr><td>拉伸 (20)</td><td><svg><use href="#check"/></svg></td><td></td><td></td></tr>
            <tr><td>倒斜角 (21)</td><td><svg><use href="#check"/></svg></td><td></td><td></td></tr>
          </tbody>
        </table>
      </div>
      <div class="scrollbar">
        <button aria-label="向上滚动"><svg width="8" height="7" viewBox="0 0 8 7"><path d="M1 6L4 1L7 6" fill="none" stroke="#444" stroke-width="1.500"/></svg></button>
        <div class="thumb"></div>
      </div>
    </div>
  </aside>

  <section class="document">
    <nav class="tabs">
      <a href="#"><svg><use href="#partmod"/></svg>腔.prt<svg class="pend"><use href="#pending"/></svg></a>
      <a href="#"><svg><use href="#partmod"/></svg>型芯.prt<svg class="pend"><use href="#pending"/></svg></a>
      <a href="#"><svg><use href="#partmod"/></svg>型腔2.prt<svg class="pend"><use href="#pending"/></svg></a>
      <a href="#"><svg><use href="#partmod"/></svg>_model6.prt<svg class="pend"><use href="#pending"/></svg></a>
      <a href="#"><svg><use href="#part"/></svg>阀体.prt</a>
      <a href="#"><svg><use href="#part"/></svg>_model1.prt</a>
      <a href="#" class="active"><svg><use href="#part"/></svg>_model7.prt<svg class="pend" viewBox="0 0 8 12"><path d="M1 3L7 9M7 3L1 9" stroke="#fff" stroke-width="1.800"/></svg></a>
    </nav>
    <div class="canvas">
      <svg class="model" viewBox="268 210 947 701" preserveAspectRatio="xMinYMin meet">
        <defs>
          <linearGradient id="cyl"><stop offset="0" stop-color="#b56800"/><stop offset=".25" stop-color="#cf7a00"/><stop offset=".6" stop-color="#e38a00"/><stop offset=".85" stop-color="#d98200"/><stop offset="1" stop-color="#b96c00"/></linearGradient>
          <linearGradient id="pocket"><stop offset="0" stop-color="#b06400"/><stop offset=".5" stop-color="#cf7a0a"/><stop offset="1" stop-color="#e68e06"/></linearGradient>
          <linearGradient id="arcwall"><stop offset="0" stop-color="#e08600"/><stop offset=".6" stop-color="#cc7800"/><stop offset="1" stop-color="#a66000"/></linearGradient>
          <linearGradient id="fillet"><stop offset="0" stop-color="#b66900"/><stop offset="1" stop-color="#dc8200"/></linearGradient>
          <linearGradient id="rim"><stop offset="0" stop-color="#e08a00"/><stop offset=".5" stop-color="#ffb800"/><stop offset=".7" stop-color="#ffe600"/><stop offset="1" stop-color="#d98400"/></linearGradient>
        </defs>
        <g stroke="#77531a" stroke-width=".9" stroke-linejoin="round">
          <!-- block -->
          <path d="M490 629V742L668 859V748Z" fill="#b96a00"/>
          <path d="M680 747L896 646V733L858 751V782L680 860Z" fill="#dc8200"/>
          <path d="M667 747V858Q673 863 680 860V747Q673 750 667 747Z" fill="url(#fillet)"/>
          <path d="M490 742L668 859Q674 863 680 860L858 782V751L896 733V646" fill="none" stroke="#5a5548"/>
          <path d="M491 631Q488 627 493 624L541 602L690 540L818 597L893 642Q899 646 893 649L680 747Q673 750 667 747Z" fill="#ffb500"/>
          <path d="M492 631L668 745Q674 748 680 745L893 648" fill="none" stroke="#f3b660"/>
          <!-- raised plate walls -->
          <path d="M540 587V612L558 622V601Z" fill="#b96a00"/>
          <path d="M558 601V622H566V602Z" fill="#c97600"/>
          <path d="M566 602V622L618 600V579Z" fill="#dc8200"/>
          <path d="M618 579V600Q630 597 638 601V580Q628 575 618 579Z" fill="#c47300"/>
          <path d="M638 580V601L662 617V596Z" fill="#b96a00"/>
          <path d="M662 596V617Q667 620 673 618V598Q667 599 662 596Z" fill="#d07b00"/>
          <path d="M673 598V618C690 610 718 612 731 628L736 619C736 600 705 588 673 598Z" fill="url(#arcwall)"/>
          <path d="M725 637V657L740 667L750 663L752 657Q752 652 742 647Z" fill="#bd6f00"/>
          <!-- plate top -->
          <path d="M540 589Q540 586 543 584L580 567L690 538Q705 527 722 531L812 574Q820 582 818 590Q816 603 798 611L763 626Q756 629 759 635L773 644Q780 648 790 645L820 634Q840 630 848 642L742 667L752 665Q755 654 742 647L727 639L725 636Q738 628 736 616C734 602 705 588 673 598Q667 600 662 596L638 580Q628 575 618 579L566 602H558Z" fill="#ffb500" stroke="#a47a1c"/>
          <path d="M758 632Q757 628 763 626L798 611Q818 603 818 590V607Q816 621 798 630L769 644Z" fill="#dc8200"/>
          <path d="M758 632Q757 628 763 626L767 625V643Z" fill="#b96a00"/>
          <path d="M798 611V630" fill="none"/>
          <!-- rear recess -->
          <path d="M658 566Q656 559 666 557L688 549Q694 544 694 540Q703 529 722 531V570L694 581Q684 585 674 579Z" fill="#ffb500" stroke="#a47a1c"/>
          <path d="M658 566Q656 559 666 557L687 550V564L673 577Q662 573 658 566Z" fill="#d27c00"/>
          <path d="M658 566Q656 559 662 558V572Z" fill="#ad6400"/>
          <path d="M695 547Q702 540 720 541V561H712Q703 561 696 554Z" fill="#c27100"/>
          <path d="M694 546Q703 537 720 538" fill="none" stroke="#f3c98a"/>
          <!-- long boss on the left -->
          <path d="M577 562V577Q580 586 593 585Q600 585 605 582L683 548Q690 545 691 538L688 524Z" fill="#dc8200"/>
          <path d="M577 562V577Q580 586 593 585L602 583V568Z" fill="#c57400"/>
          <path d="M577 562Q578 558 587 554L666 519Q674 516 683 520Q693 526 683 532L605 567Q596 571 585 569Q577 567 577 562Z" fill="#ffb500"/>
          <path d="M602 568V583M683 532V548" fill="none"/>
          <path d="M579 565Q588 573 605 568L684 533Q689 530 689 526" fill="none" stroke="#f3c98a"/>
          <!-- pocket -->
          <ellipse cx="695" cy="637" rx="37" ry="20" fill="url(#pocket)"/>
          <path d="M659 632Q666 617 695 616Q722 617 731 631" fill="none" stroke="#f3c98a" stroke-width="1.200"/>
          <!-- clamp -->
          <path d="M586 628V646Q592 656 603 656L614 658V630Z" fill="#d07a00"/>
          <path d="M603 640V656" fill="none"/>
          <path d="M586 629C586 619 604 615 617 618L616 640Q609 637 603 640Q586 639 586 629Z" fill="#ffb500"/>
          <ellipse cx="607" cy="629" rx="8" ry="4.500" fill="#a56413"/>
          <path d="M640 658L643 683Q648 693 664 693Q682 692 685 681V666Z" fill="#d07a00"/>
          <path d="M640 659Q645 661 650 657Q662 652 676 657Q686 662 685 669Q680 680 664 680Q645 678 643 668Z" fill="#ffb500"/>
          <ellipse cx="664" cy="667" rx="8" ry="4.500" fill="#a56413"/>
          <path d="M614 625L621 621L632 627L636 641L640 660V678L613 659Z" fill="#b96a00"/>
          <path d="M620 621L637 615L652 625L633 630Q627 622 620 621Z" fill="#ffb500"/>
          <path d="M633 630L652 625L656 635L637 642Z" fill="#ffdc00"/>
          <path d="M637 642L656 635L657 651L640 659Z" fill="#dc8200"/>
          <!-- slotted bar on the right -->
          <ellipse cx="860" cy="647" rx="13" ry="8" fill="#cf7b00"/>
          <path d="M846 644Q850 637 861 637Q873 639 873 646" fill="none" stroke="#a47a1c"/>
          <path d="M695 693V715L712 725V705Z" fill="#b96a00"/>
          <path d="M712 705V725H720V704Z" fill="#c97600"/>
          <path d="M720 704V725L842 671Q848 668 848 662V642Z" fill="#dc8200"/>
          <path d="M695 694Q694 691 700 688L819 635Q832 631 843 636Q850 642 846 648L841 651L721 704H712Z" fill="#ffb500"/>
          <path d="M841 651V671" fill="none"/>
          <path d="M731 680Q732 674 740 671L820 637Q834 633 842 640Q846 645 838 651L752 688Q744 691 736 687Q731 684 731 680Z" fill="#ffb500"/>
          <path d="M731 680Q732 674 740 671L820 637V652L738 688Q731 685 731 680Z" fill="#d67f00"/>
          <path d="M820 637Q834 633 842 640Q844 645 838 650L830 654L820 652Z" fill="#bd7000"/>
          <path d="M737 675V688" fill="none"/>
          <path d="M714 705H721L840 652" fill="none" stroke="#f3c98a"/>
          <!-- cylinder -->
          <path d="M719 532V586C719 619 810 619 810 586V532Z" fill="url(#cyl)"/>
          <ellipse cx="764.500" cy="531" rx="45.500" ry="26" fill="url(#rim)"/>
          <ellipse cx="764.500" cy="527" rx="41.500" ry="23" fill="#ffb500"/>
          <ellipse cx="764" cy="527" rx="13" ry="7.500" fill="#ad6a1a"/>
        </g>
        <!-- datum coordinate system -->
        <g fill="none" stroke="#5557b8" stroke-width="1.100">
          <path d="M694 440V557" stroke="#8489e6"/>
          <path d="M694 491L733 475V541L765 561L726 578V512Z"/>
          <path d="M694 557L764 527M694 557L750 594" stroke="#8d5b90"/>
          <path d="M689 557H699M694 551V563" stroke="#2a2ac8" stroke-width="2"/>
        </g>
        <path d="M694 426L697 441H691ZM771 524L763 531L759 526ZM757 600L747 597L751 591Z" fill="#1c1cb4"/>
        <g class="axis-labels">
          <text x="690" y="423">Z</text>
          <text x="772" y="524">Y</text>
          <text x="757" y="605">X</text>
        </g>
        <circle cx="922" cy="432" r="1.200" fill="#222"/>
      </svg>
      <div class="ime">
        <svg width="32" height="42" viewBox="0 0 32 42"><path d="M2 7Q2 4 5 4L23 1Q26 0 27 4L31 33Q31 36 28 37L9 41Q5 41 5 38Z" fill="#8f6f5c"/><path d="M1 6Q1 4 4 3L22 0Q25 0 26 3L29 32Q29 35 26 36L8 39Q5 40 4 37Z" fill="#f0652a"/><text x="5" y="31" class="ime-logo">S</text></svg>
        <span>A</span>
      </div>
    </div>
  </section>
</main>
</body>
</html>
```

FILE: styles.css
```css
* {
  box-sizing: border-box;
}
body {
  margin: 0;
  height: 100vh;
  overflow: hidden;
  display: flex;
  flex-direction: column;
  background: #fff;
  color: #222;
  font-family: "Noto Sans", "Noto Sans CJK SC", sans-serif;
  font-size: 12px;
}
button, input, select {
  font: inherit;
  color: inherit;
}
button {
  display: flex;
  align-items: center;
  justify-content: center;
  padding: 0;
  border: none;
  background: none;
  white-space: nowrap;
}
/* kept rendered, the icons need its gradients */
.sprite {
  position: absolute;
  width: 0;
  height: 0;
}
.caret {
  flex: none;
  width: 0;
  height: 0;
  border: 3px solid transparent;
  border-top: 4px solid #111;
  border-bottom: 0;
}
.caret.up {
  border-top: 0;
  border-bottom: 4px solid #999;
}
.caret.bar {
  position: relative;
}
.caret.bar::before {
  content: "";
  position: absolute;
  left: -3px;
  top: -7px;
  width: 6px;
  height: 1px;
  background: #111;
}

/* menu bar */
.menubar {
  display: flex;
  align-items: center;
  gap: 17px;
  flex: none;
  height: 29px;
  margin-left: 8px;
  padding-left: 10px;
  background: #dadada;
  font-size: 13px;
}
.menubar button {
  height: 26px;
}
.search {
  align-self: flex-start;
  width: 64px;
  height: 25px;
  margin-left: auto;
  padding: 0 1px;
  border: 1px solid #aaa;
  border-width: 0 0 1px 1px;
  background: #fff;
  font-size: 11px;
}
.search::placeholder {
  color: #999;
}

/* ribbon */
.ribbon {
  display: flex;
  flex: none;
  height: 114px;
  padding: 6px 0 4px;
  border-bottom: 1px solid #ddd;
  font-size: 11px;
  line-height: 16px;
}
.group {
  display: flex;
  flex-direction: column;
  justify-content: space-between;
  flex: none;
  border-right: 1px solid #d5d5d5;
}
.g-curve { width: 45px; }
.g-feature { width: 308px; }
.g-sync { width: 145px; }
.g-std { width: 78px; }
.g-gear { width: 39px; }
.g-spring { width: 44px; }
.g-mach { width: 39px; }
.g-model { width: 73px; }
.g-cubes { width: 22px; }
.g-dim { width: 216px; }
.g-surface { width: 32px; }
.g-assembly { width: 154px; }
.title {
  display: flex;
  align-items: center;
  height: 15px;
  color: #226a80;
  white-space: nowrap;
}
.title span {
  flex: 1;
  min-width: 0;
  text-align: center;
}
.title button {
  flex: none;
  width: 18px;
  height: 15px;
}
.g-std .title span, .g-gear .title span, .g-spring .title span, .g-mach .title span, .g-model .title span {
  padding-left: 1px;
  text-align: left;
}
.gallery {
  display: flex;
  height: 84px;
}
.gallery-items {
  display: flex;
  flex-direction: column;
  justify-content: space-around;
  width: 26px;
  padding-right: 4px;
  border: 1px solid #ddd;
  border-left: none;
}
.gallery-nav {
  display: flex;
  flex: 1;
  flex-direction: column;
  justify-content: space-around;
  align-items: center;
}
.gallery-nav button {
  width: 12px;
  height: 20px;
}
.tools {
  display: flex;
  gap: 5px;
  padding: 0 6px 0 8px;
}
.g-surface .tools {
  justify-content: center;
  padding: 0;
}
.big {
  flex-direction: column;
  justify-content: flex-start;
  min-width: 24px;
  height: 80px;
}
.big > svg {
  width: 26px;
  height: 35px;
  margin-bottom: 8px;
}
.big .caret {
  margin-top: 8px;
}
.big:disabled {
  color: #bbb;
}
.more {
  width: 28px;
}
.more span {
  display: flex;
  align-items: center;
  justify-content: center;
  width: 28px;
  height: 38px;
  margin-bottom: 5px;
  border: 1px solid #ddd;
  border-radius: 2px;
}
.more svg {
  width: 14px;
  height: 18px;
}
.stack {
  display: flex;
  flex-direction: column;
  gap: 6px;
}
.stack button {
  justify-content: flex-start;
  gap: 3px;
  height: 22px;
}
.stack svg {
  width: 14px;
  height: 16px;
}
.stack .caret {
  margin-left: 3px;
}
.icons {
  display: flex;
  flex-direction: column;
  gap: 13px;
  padding: 9px 3px 0;
}
.icons div {
  display: flex;
  gap: 1px;
}
.icons button, .icons svg {
  width: 16px;
  height: 20px;
}
.icons hr {
  width: 1px;
  height: 20px;
  margin: 0 1px;
  border: none;
  background: #ddd;
}
symbol text {
  font-family: "Liberation Sans", sans-serif;
}

/* selection bar */
.selectbar {
  display: flex;
  align-items: center;
  flex: none;
  height: 39px;
  padding-top: 1px;
  border-bottom: 1px solid #8c8c8c;
}
.combo {
  position: relative;
  flex: none;
  height: 26px;
}
.combo select {
  width: 100%;
  height: 26px;
  padding: 0 1px;
  border: 1px solid #aaa;
  border-radius: 0;
  background: #fff;
  appearance: none;
  font-size: 11px;
}
.combo::after {
  content: "";
  position: absolute;
  right: 5px;
  top: 11px;
  border: 4px solid transparent;
  border-top: 5px solid #111;
  border-bottom: 0;
}
.filter {
  width: 128px;
  margin-left: -24px;
  margin-right: 7px;
}
.scope {
  width: 132px;
}
.strip {
  display: flex;
  align-items: center;
  flex: none;
  height: 26px;
}
.strip button {
  flex: 1;
  height: 24px;
}
.strip svg {
  width: 15px;
  height: 17px;
}
.strip .on {
  background: #d0e7ed;
  border: 1px solid #b9d8e0;
}
.s1 {
  width: 188px;
  margin-left: 3px;
}
.s2 {
  width: 261px;
}
.s3 {
  width: 226px;
  margin-left: 4px;
  padding-left: 5px;
  border: 1px solid #ddd;
  border-width: 0 1px;
}
.s3 button {
  flex: none;
  width: 19px;
}
.s3 .caret {
  margin: 0 2px;
}

/* part navigator */
main {
  display: flex;
  flex: 1;
  min-height: 0;
}
aside {
  display: flex;
  flex-direction: column;
  flex: none;
  width: 268px;
  padding-right: 7px;
  border-right: 1px solid #8c8c8c;
}
.panel-top {
  display: flex;
  justify-content: flex-end;
  align-items: center;
  flex: none;
  height: 35px;
  padding: 3px 5px 0 0;
}
.maximize {
  width: 11px;
  height: 13px;
  border: 1px solid #222;
  border-top-width: 2px;
}
.navigator {
  display: flex;
  flex: 1;
  min-height: 0;
  border-top: 1px solid #ddd;
  background: linear-gradient(#f0f0f0 26px, #fff 26px);
}
.tree {
  width: 244px;
  overflow: hidden;
}
/* the name column runs out past the left edge */
.tree table {
  width: 266px;
  margin-left: -22px;
  table-layout: fixed;
  border-collapse: separate;
  border-spacing: 0;
}
.tree th, .tree td {
  height: 26px;
  padding: 2px 0 0 4px;
  border-right: 1px solid #e2e2e2;
  border-bottom: 1px solid #ececec;
  text-align: left;
  white-space: nowrap;
  line-height: 16px;
}
.tree th {
  width: 75px;
  background: #f0f0f0;
  border-color: #d8d8d8;
  font-weight: normal;
}
.tree th:first-child {
  width: 97px;
}
.tree td:first-child {
  padding-left: 0;
}
.tree th:last-child, .tree td:last-child {
  width: auto;
  border-right: none;
}
.tree tbody tr:nth-child(even) {
  background: #f9f9f9;
}
.tree tbody tr:nth-child(5n) td {
  height: 25px;
}
.tree svg {
  display: block;
  width: 10px;
  height: 13px;
}
.tree .off {
  color: #999;
}
.scrollbar {
  display: flex;
  flex-direction: column;
  width: 14px;
  padding: 26px 0 7px;
}
.scrollbar button {
  height: 22px;
  background: #f0f0f0;
}
.thumb {
  flex: 1;
  background: #cbcbcb;
}

/* document window */
.document {
  display: flex;
  flex-direction: column;
  flex: 1;
  min-width: 0;
}
.tabs {
  display: flex;
  gap: 19px;
  flex: none;
  height: 28px;
  padding-left: 4px;
  border-bottom: 1px solid #7f8f94;
  box-shadow: inset 0 -2px #a9dfe8;
}
.tabs a {
  display: flex;
  align-items: center;
  height: 26px;
  padding-top: 1px;
  color: #222;
  text-decoration: none;
  white-space: nowrap;
}
.tabs svg {
  width: 12px;
  height: 14px;
  margin-right: 3px;
}
.tabs .pend {
  width: 8px;
  height: 12px;
  margin: 0 0 0 4px;
}
.tabs .active {
  padding: 1px 3px 0 4px;
  background: #4a9bb7;
  color: #fff;
}
.canvas {
  position: relative;
  flex: 1;
  min-height: 0;
  background: linear-gradient(#b4b4b6, #cacacc 28%, #dcdcdf 68%, #eaeaec);
}
.model {
  display: block;
  width: 100%;
  height: 100%;
}
.axis-labels {
  font-family: "Liberation Sans", sans-serif;
  font-size: 11px;
  fill: #33337c;
}
.ime {
  position: absolute;
  right: 0;
  bottom: 22px;
  display: flex;
  align-items: center;
  width: 56px;
  height: 42px;
}
.ime::before {
  content: "";
  position: absolute;
  left: 20px;
  right: 0;
  top: 7px;
  bottom: 2px;
  border: 1px solid #d5d8dc;
  border-right: none;
  background: #fff;
}
.ime svg, .ime span {
  position: relative;
}
.ime span {
  margin-left: 4px;
  padding-top: 4px;
  color: #17609f;
  font-size: 20px;
}
.ime-logo {
  font: bold 32px "Liberation Sans", sans-serif;
  fill: #fff;
}
```
